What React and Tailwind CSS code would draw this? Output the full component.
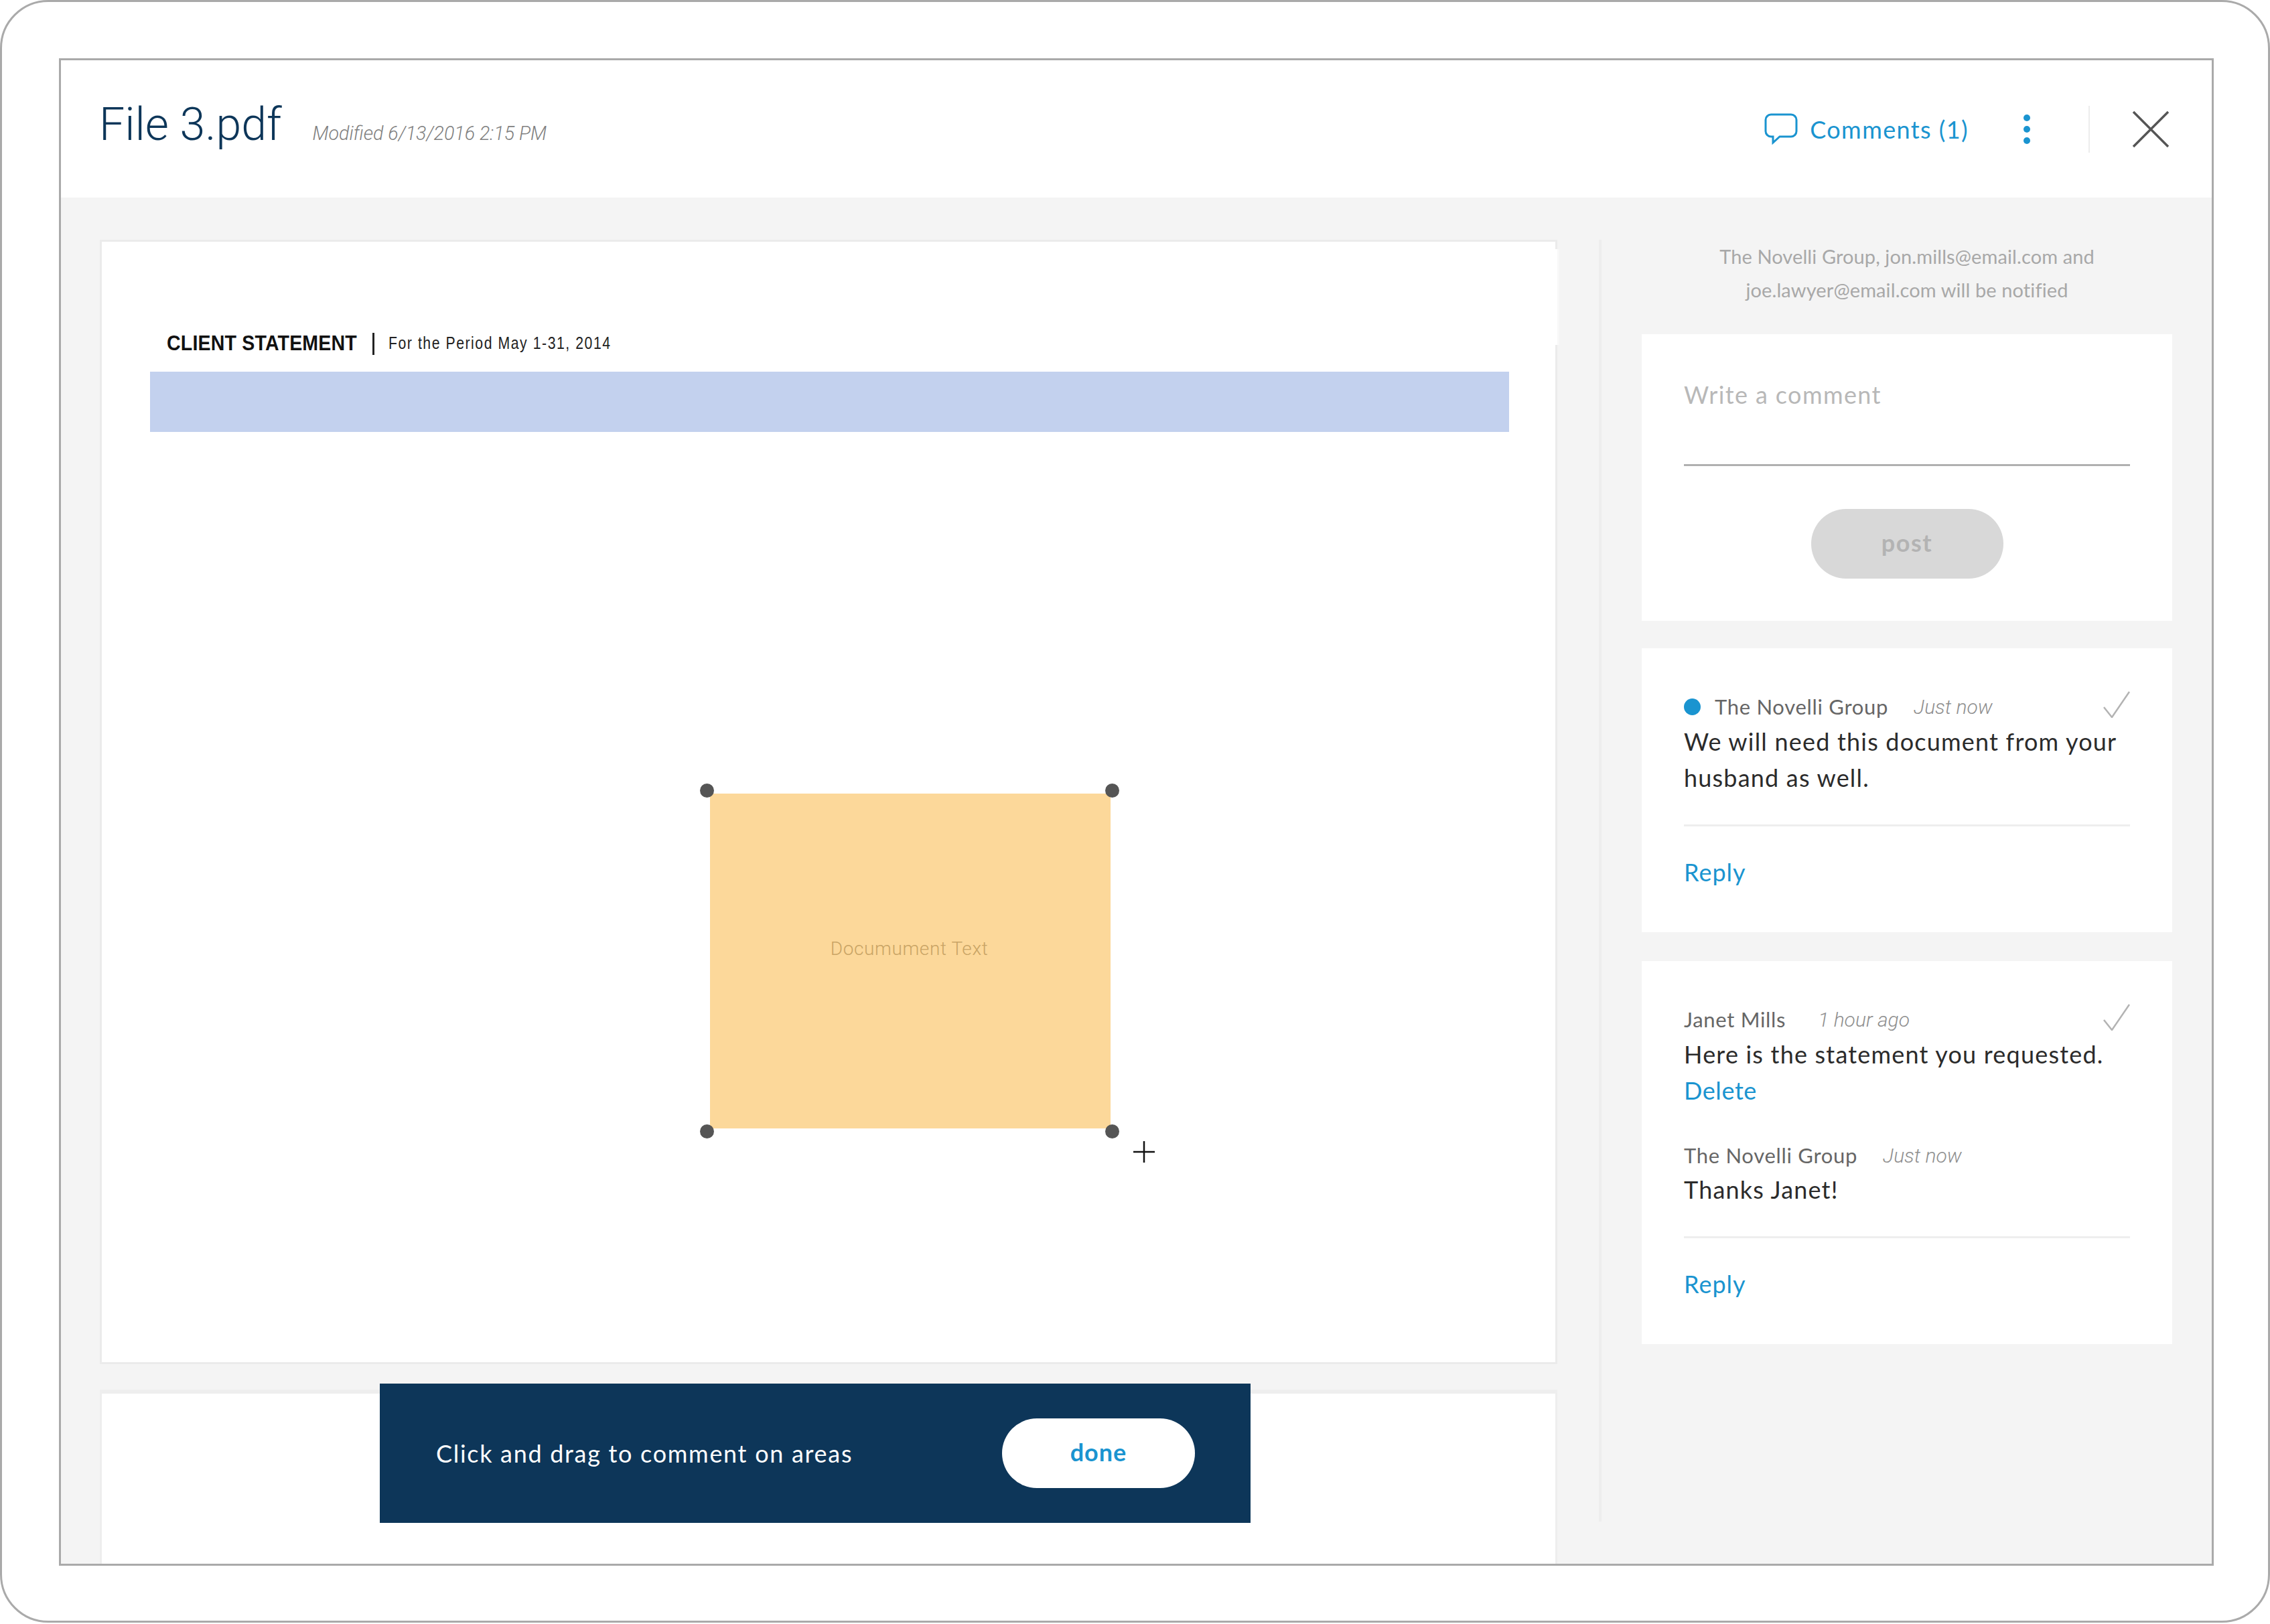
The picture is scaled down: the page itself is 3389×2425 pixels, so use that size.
const blue = 'text-[#1a94d0]';

const Handle = ({ className }) => (
  <div className={`absolute w-[21px] h-[21px] rounded-full bg-[#555555] ${className}`}></div>
);

const Check = () => (
  <svg className="w-[40px] h-[40px] shrink-0" viewBox="0 0 40 40" fill="none" stroke="#b3b3b3" strokeWidth="2.5">
    <path d="M1 24l12 15L39 1" />
  </svg>
);

const Author = ({ name, time, gap = 'ml-[38px]' }) => (
  <>
    <span className="text-[31px] text-[#666666] tracking-[0.7px]">{name}</span>
    <span className={`${gap} font-['Roboto',sans-serif] font-light text-[30px] italic text-[#8f8f8f]`}>{time}</span>
  </>
);

const App = () => {
  return (
    <div className="w-[3389px] h-[2425px] bg-white font-['Lato','Open_Sans',sans-serif]">
      <div className="w-[3389px] h-[2423px] pl-[85px] pr-[84px] pt-[84px] pb-[83px] border-[3px] border-[#aaaaaa] rounded-[72px] bg-white">
        <div className="w-[3217px] h-[2251px] border-[3px] border-[#aaaaaa] flex flex-col overflow-hidden">
          {/* header */}
          <div className="h-[205px] shrink-0 bg-white flex items-center pl-[57px] pr-[63px]">
            <h1 className="font-['Roboto',sans-serif] text-[68px] font-light text-[#0d3659] leading-none mt-[-13px]">File 3.pdf</h1>
            <span className="ml-[46px] mt-[14px] font-['Roboto',sans-serif] text-[28.6px] italic font-light text-[#808080]">Modified 6/13/2016 2:15 PM</span>
            <div className="ml-auto flex items-center">
              <svg className="w-[50px] h-[47px]" viewBox="0 0 50 47" fill="none" stroke="#1a94d0" strokeWidth="3">
                <path d="M10 2h30a8 8 0 0 1 8 8v17a8 8 0 0 1-8 8H23L13 44v-9h-3a8 8 0 0 1-8-8V10a8 8 0 0 1 8-8z" />
              </svg>
              <span className={`ml-[18px] text-[36px] ${blue} tracking-[1.4px]`}>Comments (1)</span>
              <div className="ml-[82px] flex flex-col gap-[7px]">
                <div className="w-[10px] h-[10px] rounded-full bg-[#1a94d0]"></div>
                <div className="w-[10px] h-[10px] rounded-full bg-[#1a94d0]"></div>
                <div className="w-[10px] h-[10px] rounded-full bg-[#1a94d0]"></div>
              </div>
              <div className="ml-[87px] w-[2px] h-[70px] bg-[#ececec]"></div>
              <svg className="ml-[63px] w-[56px] h-[56px]" viewBox="0 0 56 56" stroke="#555555" strokeWidth="3.5">
                <path d="M2 2l52 52M54 2L2 54" />
              </svg>
            </div>
          </div>

          {/* body */}
          <div className="relative flex-1 min-h-0 bg-[#f4f4f4] flex pl-[58px] pt-[63px]">
            <div className="w-[2176px] shrink-0 flex flex-col gap-[38px]">
              <div className="relative h-[1679px] shrink-0 bg-white border-[3px] border-[#ebebeb] px-[72px] pt-[131px]">
                <div className="absolute right-[-6px] top-[11px] w-[7px] h-[143px] bg-white border-r-[3px] border-[#f8f8f8]"></div>
                <div className="flex items-center h-[42px] pl-[25px]">
                  <span className="font-['Liberation_Sans',sans-serif] font-bold text-[31px] text-[#111111] tracking-[0.2px] scale-x-[0.92] origin-left whitespace-nowrap w-[285px]">CLIENT STATEMENT</span>
                  <div className="ml-[22px] w-[3px] h-[33px] bg-[#222222]"></div>
                  <span className="ml-[21px] font-['Liberation_Sans',sans-serif] text-[25px] text-[#222222] tracking-[1.8px] scale-x-[0.85] origin-left whitespace-nowrap">For the Period May 1-31, 2014</span>
                </div>
                <div className="mt-[21px] h-[90px] w-[2029px] bg-[#c3d1ee]"></div>

                <div className="absolute left-[908px] top-[824px] w-[598px] h-[500px] bg-[#fcd89a] flex items-center justify-center">
                  <span className="mt-[-36px] mr-[3px] text-[28px] text-[#c9a465] font-['Roboto',sans-serif] font-light tracking-[0.6px]">Documument Text</span>
                </div>
                <Handle className="left-[893px] top-[809px]" />
                <Handle className="left-[1498px] top-[809px]" />
                <Handle className="left-[893px] top-[1318px]" />
                <Handle className="left-[1498px] top-[1318px]" />
                <svg className="absolute left-[1540px] top-[1343px] w-[32px] h-[32px]" viewBox="0 0 32 32" stroke="#111111" strokeWidth="2.5">
                  <path d="M16 0v32M0 16h32" />
                </svg>
              </div>
              <div className="flex-1 bg-white border-x-[3px] border-t-[6px] border-[#eeeeee]"></div>
            </div>

            {/* sidebar */}
            <div className="ml-[62px] w-[4px] h-[1914px] shrink-0 bg-[#ededed]"></div>
            <div className="ml-[60px] w-[792px] shrink-0 flex flex-col text-[#2b2b2b]">
              <p className="text-center text-[29px] leading-[50px] text-[#a8a8a8] h-[141px] tracking-[0.1px]">
                The Novelli Group, jon.mills@email.com and<br />joe.lawyer@email.com will be notified
              </p>

              <div className="h-[428px] bg-white px-[63px] pt-[66px] flex flex-col">
                <div className="h-[131px] border-b-[3px] border-[#b0b0b0] text-[36px] leading-[48px] text-[#b8b8b8] tracking-[1.4px]">Write a comment</div>
                <button className="mt-[64px] self-center w-[287px] h-[104px] pb-[4px] rounded-full bg-[#d8d8d8] text-[36px] font-bold text-[#b3b3b3] tracking-[1.5px]">post</button>
              </div>

              <div className="mt-[41px] h-[424px] bg-white px-[63px] pt-[64px]">
                <div className="flex items-center h-[46px]">
                  <div className="w-[25px] h-[25px] rounded-full bg-[#1a94d0] mr-[21px]"></div>
                  <Author name="The Novelli Group" time="Just now" />
                  <div className="ml-auto mt-[-6px]"><Check /></div>
                </div>
                <p className="text-[36px] leading-[54px] tracking-[1.2px] mt-[2px] whitespace-nowrap">We will need this document from your<br />husband as well.</p>
                <div className="mt-[43px] h-[3px] bg-[#eeeeee]"></div>
                <div className={`mt-[41px] text-[36px] leading-[54px] tracking-[1px] ${blue}`}>Reply</div>
              </div>

              <div className="mt-[43px] h-[572px] bg-white px-[63px] pt-[64px]">
                <div className="flex items-center h-[46px]">
                  <Author name="Janet Mills" time="1 hour ago" gap="ml-[48px]" />
                  <div className="ml-auto mt-[-6px]"><Check /></div>
                </div>
                <p className="text-[36px] leading-[54px] tracking-[1.2px] mt-[2px] whitespace-nowrap">Here is the statement you requested.</p>
                <div className={`text-[36px] leading-[54px] tracking-[0.6px] ${blue}`}>Delete</div>
                <div className="flex items-center h-[46px] mt-[47px]">
                  <Author name="The Novelli Group" time="Just now" gap="ml-[38px]" />
                </div>
                <p className="text-[36px] leading-[54px] tracking-[1.2px] mt-[1px]">Thanks Janet!</p>
                <div className="mt-[43px] h-[3px] bg-[#eeeeee]"></div>
                <div className={`mt-[41px] text-[36px] leading-[54px] tracking-[1px] ${blue}`}>Reply</div>
              </div>
            </div>

            {/* drag hint */}
            <div className="absolute left-[476px] top-[1771px] w-[1300px] h-[208px] bg-[#0d3659] flex items-center pl-[84px]">
              <span className="text-[36px] text-white tracking-[1.7px]">Click and drag to comment on areas</span>
              <button className={`ml-auto mr-[83px] w-[288px] h-[104px] pb-[4px] rounded-full bg-white text-[36px] font-bold tracking-[1px] ${blue}`}>done</button>
            </div>
          </div>
        </div>
      </div>
    </div>
  );
};

export default App;
